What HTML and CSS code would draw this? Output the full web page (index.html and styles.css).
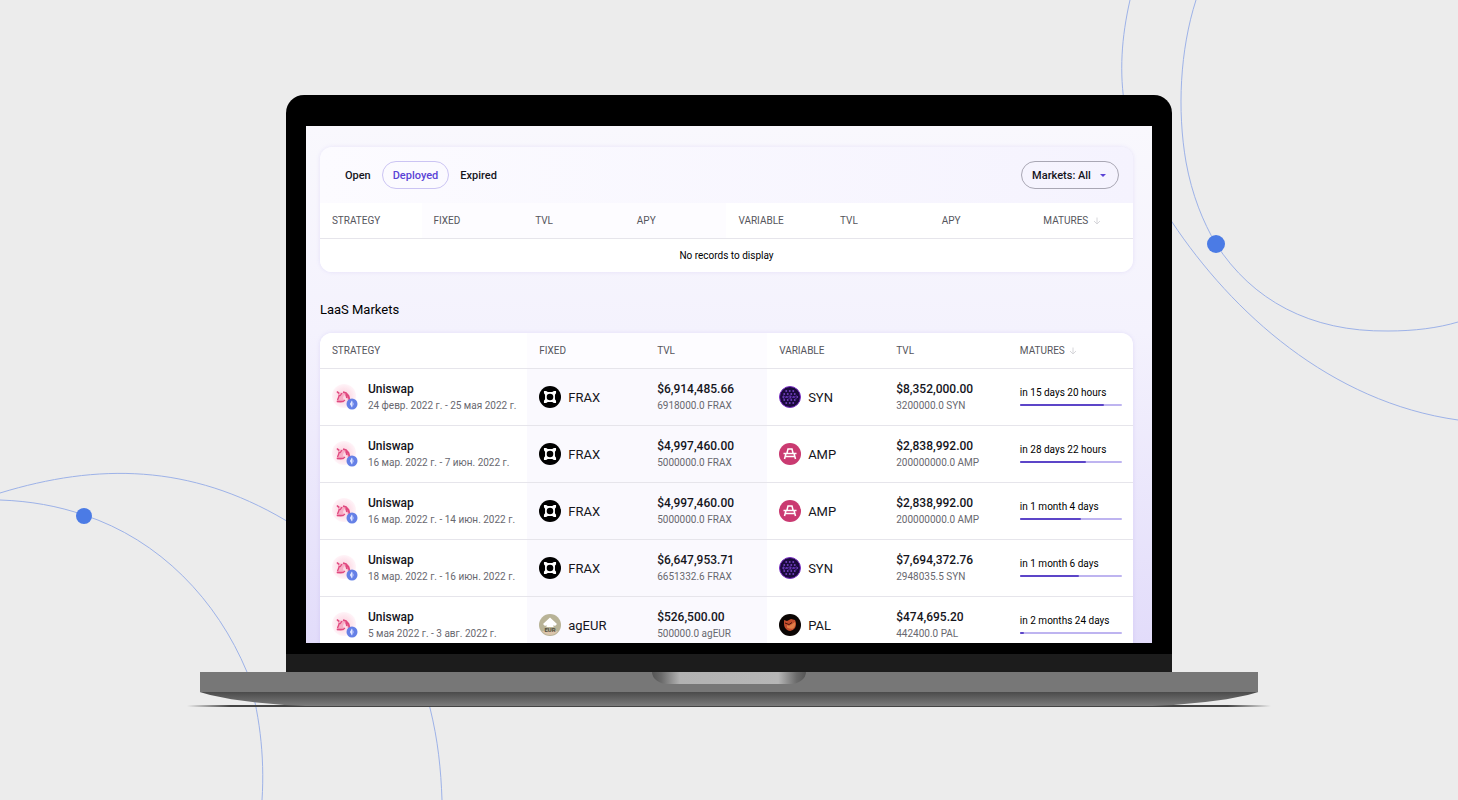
FILE: index.html
```html
<!DOCTYPE html>
<html lang="en">
<head>
    <meta charset="UTF-8">
    <title>LaaS Markets</title>
    <link rel="stylesheet" href="styles.css">
</head>
<body>
<svg class="icons" aria-hidden="true">
    <defs>
        <radialGradient id="glow">
            <stop offset="0" stop-color="#fbd3e1"/>
            <stop offset="0.6" stop-color="#fde4ec"/>
            <stop offset="1" stop-color="#fff4f8"/>
        </radialGradient>
        <symbol id="uniswap" viewBox="0 0 26 26">
            <circle cx="12" cy="12" r="12" fill="url(#glow)"/>
            <path d="M6 8l4 1 3-1 4 3 2 6-3 0-2-5-2-1-1 3 1 2-3 3-5-1 2-4z" fill="#f6adc5"/>
            <path d="M5 7.500l2 2M11 8l3 1 2.500 3 1 4M14 10l1 4" fill="none" stroke="#e0487f" stroke-width="1.700"/>
            <path d="M7.500 11l-2 5M10 9l-2 3M5 17.500h6l2-1.500" fill="none" stroke="#e0487f" stroke-width="1.300"/>
            <circle cx="20" cy="20" r="5.500" fill="#6580e6"/>
            <path d="M20 16.500l-2 3.500 2 3.500 2-3.500z" fill="#a9b8f7"/>
            <path d="M20 16.500v7l-2-3.500z" fill="#e3e8ff"/>
        </symbol>
        <symbol id="frax" viewBox="0 0 20 20">
            <circle cx="10" cy="10" r="10" fill="#000"/>
            <path d="M4.500 4.500h2l1.500 1h4l1.500-1h2v2l-1 1.500v4l1 1.500v2h-2l-1.500-1h-4l-1.500 1h-2v-2l1-1.500v-4l-1-1.500z" fill="#fff"/>
            <circle cx="10" cy="10" r="3" fill="#000"/>
        </symbol>
        <symbol id="syn" viewBox="0 0 22 22">
            <circle cx="11" cy="11" r="10.500" fill="#1b0a3e" stroke="#7a2fc4"/>
            <path d="M7 5h9M5 8h13M4 11h15M5 14h13M7 17h9" fill="none" stroke="#8a4fe0" stroke-width="1.400" stroke-linecap="round" stroke-dasharray="0.500 3"/>
            <path d="M4 9.500l3.500 2 3.500-2 3.500 2 3.500-2M4 13l3.500-2 3.500 2 3.500-2 3.500 2" fill="none" stroke="#5a2cab" stroke-width="0.700"/>
        </symbol>
        <symbol id="amp" viewBox="0 0 22 22">
            <circle cx="11" cy="11" r="11" fill="#ca3a71"/>
            <path d="M8 10l1-4h4l1 4M4.500 10.500h13M6 13.500h10M7 10.500l-1.500 5.500M15 10.500l1.500 5.500" fill="none" stroke="#fff" stroke-width="1.500"/>
        </symbol>
        <symbol id="ageur" viewBox="0 0 22 22">
            <circle cx="11" cy="11" r="11" fill="#b8b397"/>
            <path d="M3 17a10 10 0 0 0 16 0z" fill="#dcc5ab"/>
            <path d="M11 3.500l7 6.500-2 2-1.500-1v2h-7v-2l-1.500 1-2-2z" fill="#fff"/>
            <text x="11" y="18" text-anchor="middle" class="coin-label">EUR</text>
        </symbol>
        <symbol id="pal" viewBox="0 0 22 22">
            <circle cx="11" cy="11" r="11" fill="#0b0503"/>
            <path d="M5 6l3 1 4-2 4 1q2 4 0 8-3 4-7 2.500-4-2.500-4-6.500z" fill="#c24c2c"/>
            <path d="M8 11q2 2 5-1l3-2q1 4-2 6.500-3 1-6-1z" fill="#e07f48"/>
            <path d="M6 9l4 1.500 3-2" fill="none" stroke="#4a160b"/>
        </symbol>
        <symbol id="arrow" viewBox="0 0 8 8">
            <path d="M4 0.500v6.500M1 4l3 3 3-3" fill="none" stroke="#d6d6da"/>
        </symbol>
    </defs>
</svg>

<svg class="orbits" viewBox="0 0 1458 800" preserveAspectRatio="xMidYMid slice" aria-hidden="true">
    <path d="M1196 0C1180 50 1177 110 1186 162C1192 195 1203 222 1216 244C1252 300 1310 332 1388 331C1414 331 1438 328 1458 322"/>
    <path d="M1130 0C1113 75 1120 140 1172 222C1232 312 1330 402 1458 420"/>
    <path d="M0 493C98 463 190 464 285 520C360 565 410 630 430 708C438 740 441 770 442 800"/>
    <path d="M0 500C30 501 58 506 84 515C160 540 217 600 247 672C259 710 265 755 262 800"/>
    <circle cx="1216" cy="244" r="9"/>
    <circle cx="84" cy="516" r="8"/>
</svg>

<div class="laptop">
    <div class="lid">
        <main class="screen">
            <section class="card">
                <div class="toolbar">
                    <div class="tabs">
                        <button type="button" class="tab">Open</button>
                        <button type="button" class="tab active">Deployed</button>
                        <button type="button" class="tab">Expired</button>
                    </div>
                    <div class="filter">
                        <select aria-label="Markets">
                            <option>Markets: All</option>
                        </select>
                        <svg class="caret" viewBox="0 0 8 5" aria-hidden="true"><path d="M1 1h6l-3 3z"/></svg>
                    </div>
                </div>
                <table class="positions">
                    <thead>
                    <tr>
                        <th>STRATEGY</th>
                        <th class="tint">FIXED</th>
                        <th class="tint">TVL</th>
                        <th class="tint">APY</th>
                        <th>VARIABLE</th>
                        <th>TVL</th>
                        <th>APY</th>
                        <th>MATURES <svg class="sort"><use href="#arrow"/></svg></th>
                    </tr>
                    </thead>
                    <tbody>
                    <tr>
                        <td colspan="8" class="empty">No records to display</td>
                    </tr>
                    </tbody>
                </table>
            </section>

            <h2>LaaS Markets</h2>

            <section class="card">
                <table class="markets">
                    <thead>
                    <tr>
                        <th class="col-strategy">STRATEGY</th>
                        <th class="col-fixed tint">FIXED</th>
                        <th class="col-fixed-tvl tint">TVL</th>
                        <th class="col-variable">VARIABLE</th>
                        <th class="col-variable-tvl">TVL</th>
                        <th class="col-matures">MATURES <svg class="sort"><use href="#arrow"/></svg></th>
                    </tr>
                    </thead>
                    <tbody>
                    <tr>
                        <td><div class="strategy"><svg><use href="#uniswap"/></svg><div><div class="main">Uniswap</div><div class="sub">24 февр. 2022 г. - 25 мая 2022 г.</div></div></div></td>
                        <td class="tint"><div class="coin"><svg><use href="#frax"/></svg>FRAX</div></td>
                        <td class="tint"><div class="main">$6,914,485.66</div><div class="sub">6918000.0 FRAX</div></td>
                        <td><div class="coin"><svg><use href="#syn"/></svg>SYN</div></td>
                        <td><div class="main">$8,352,000.00</div><div class="sub">3200000.0 SYN</div></td>
                        <td><div class="matures">in 15 days 20 hours</div><div class="bar"><div class="fill" style="width: 82%"></div></div></td>
                    </tr>
                    <tr>
                        <td><div class="strategy"><svg><use href="#uniswap"/></svg><div><div class="main">Uniswap</div><div class="sub">16 мар. 2022 г. - 7 июн. 2022 г.</div></div></div></td>
                        <td class="tint"><div class="coin"><svg><use href="#frax"/></svg>FRAX</div></td>
                        <td class="tint"><div class="main">$4,997,460.00</div><div class="sub">5000000.0 FRAX</div></td>
                        <td><div class="coin"><svg><use href="#amp"/></svg>AMP</div></td>
                        <td><div class="main">$2,838,992.00</div><div class="sub">200000000.0 AMP</div></td>
                        <td><div class="matures">in 28 days 22 hours</div><div class="bar"><div class="fill" style="width: 65%"></div></div></td>
                    </tr>
                    <tr>
                        <td><div class="strategy"><svg><use href="#uniswap"/></svg><div><div class="main">Uniswap</div><div class="sub">16 мар. 2022 г. - 14 июн. 2022 г.</div></div></div></td>
                        <td class="tint"><div class="coin"><svg><use href="#frax"/></svg>FRAX</div></td>
                        <td class="tint"><div class="main">$4,997,460.00</div><div class="sub">5000000.0 FRAX</div></td>
                        <td><div class="coin"><svg><use href="#amp"/></svg>AMP</div></td>
                        <td><div class="main">$2,838,992.00</div><div class="sub">200000000.0 AMP</div></td>
                        <td><div class="matures">in 1 month 4 days</div><div class="bar"><div class="fill" style="width: 60%"></div></div></td>
                    </tr>
                    <tr>
                        <td><div class="strategy"><svg><use href="#uniswap"/></svg><div><div class="main">Uniswap</div><div class="sub">18 мар. 2022 г. - 16 июн. 2022 г.</div></div></div></td>
                        <td class="tint"><div class="coin"><svg><use href="#frax"/></svg>FRAX</div></td>
                        <td class="tint"><div class="main">$6,647,953.71</div><div class="sub">6651332.6 FRAX</div></td>
                        <td><div class="coin"><svg><use href="#syn"/></svg>SYN</div></td>
                        <td><div class="main">$7,694,372.76</div><div class="sub">2948035.5 SYN</div></td>
                        <td><div class="matures">in 1 month 6 days</div><div class="bar"><div class="fill" style="width: 58%"></div></div></td>
                    </tr>
                    <tr>
                        <td><div class="strategy"><svg><use href="#uniswap"/></svg><div><div class="main">Uniswap</div><div class="sub">5 мая 2022 г. - 3 авг. 2022 г.</div></div></div></td>
                        <td class="tint"><div class="coin"><svg><use href="#ageur"/></svg>agEUR</div></td>
                        <td class="tint"><div class="main">$526,500.00</div><div class="sub">500000.0 agEUR</div></td>
                        <td><div class="coin"><svg><use href="#pal"/></svg>PAL</div></td>
                        <td><div class="main">$474,695.20</div><div class="sub">442400.0 PAL</div></td>
                        <td><div class="matures">in 2 months 24 days</div><div class="bar"><div class="fill" style="width: 4%"></div></div></td>
                    </tr>
                    </tbody>
                </table>
            </section>
        </main>
        <div class="chin"></div>
    </div>
    <div class="base"><div class="notch"></div></div>
    <div class="underside"></div>
    <div class="ground"></div>
</div>
</body>
</html>
```

FILE: styles.css
```css
* {
    box-sizing: border-box;
}
body {
    position: relative;
    margin: 0;
    min-height: 100vh;
    padding-top: 95px;
    overflow: hidden;
    background: #ECECEC;
    font-family: Roboto, "Liberation Sans", sans-serif;
    color: #15151C;
}
.icons {
    position: absolute;
    width: 0;
    height: 0;
}
.coin-label {
    font: 700 6px Roboto, sans-serif;
    fill: #55513F;
}
.orbits {
    position: absolute;
    left: 0;
    top: 0;
    width: 100%;
    height: 100%;
}
.orbits path {
    fill: none;
    stroke: #9DB2E8;
}
.orbits circle {
    fill: #4B7BE5;
}

/* laptop */
.laptop {
    position: relative;
    display: flex;
    flex-direction: column;
    align-items: center;
    width: 74.4%;
    margin: 0 auto;
}
.lid {
    width: 81.7%;
    background: #000;
    border-radius: 18px 18px 0 0;
    overflow: hidden;
}
.screen {
    height: 517px;
    margin: 31px 20px 11px;
    padding: 21px 19px 0 14px;
    overflow: hidden;
    background: linear-gradient(to bottom, #F9F8FD 0%, #F4F2FD 40%, #E2DCFA 100%);
}
.chin {
    height: 18px;
    background: #1C1C1C;
}
.base {
    display: flex;
    justify-content: center;
    width: 97.6%;
    height: 20px;
    background: #777;
}
.notch {
    width: 154px;
    height: 12px;
    border-radius: 0 0 16px 16px / 0 0 12px 12px;
    background: linear-gradient(to right, #555 0%, #6A6A6A 6%, #B2B2B2 18%, #B6B6B6 82%, #6A6A6A 94%, #555 100%);
}
.underside {
    width: 97.6%;
    height: 14px;
    background: linear-gradient(to bottom, #4B4B4B, #7C7C7C);
    clip-path: polygon(0 0, 100% 0, 99% 22%, 97% 52%, 95% 72%, 92% 92%, 90% 100%, 10% 100%, 8% 92%, 5% 72%, 3% 52%, 1% 22%);
}
.ground {
    width: 100%;
    height: 2px;
    margin-top: -1px;
    background: linear-gradient(to right, transparent, #444 4%, #444 96%, transparent);
}

/* app */
.card {
    border-radius: 12px;
    overflow: hidden;
    background: linear-gradient(to right, #FCFBFF, #F5F3FE);
    box-shadow: 0 0 4px rgba(120, 100, 220, 0.14);
}
.toolbar {
    display: flex;
    align-items: center;
    justify-content: space-between;
    height: 56px;
    padding: 0 14px;
}
.tabs {
    display: flex;
}
.tab {
    height: 28px;
    padding: 0 10px;
    border: 1px solid transparent;
    border-radius: 14px;
    background: none;
    font: 500 11px Roboto, sans-serif;
    color: inherit;
}
.tab.active {
    border-color: #CBC4F3;
    color: #5A43D6;
}
.filter {
    position: relative;
}
.filter select {
    width: 98px;
    height: 28px;
    padding: 0 10px;
    border: 1px solid #A9A7B4;
    border-radius: 14px;
    appearance: none;
    background: none;
    font: 500 11px Roboto, sans-serif;
    color: inherit;
}
.caret {
    position: absolute;
    right: 12px;
    top: 12px;
    width: 8px;
    height: 5px;
    fill: #5A43D6;
    pointer-events: none;
}
h2 {
    margin: 29px 0 14px;
    font-size: 13px;
    font-weight: 400;
    line-height: 18px;
    color: #000;
}
table {
    width: 100%;
    table-layout: fixed;
    border-collapse: separate;
    border-spacing: 0;
    background: #FFF;
}
th, td {
    padding: 0 0 0 12px;
    border-bottom: 1px solid #E6E5EB;
    text-align: left;
    white-space: nowrap;
}
th {
    height: 36px;
    font-size: 10px;
    font-weight: 400;
    color: #55555C;
}
.positions td {
    height: 33px;
    border-bottom: 0;
}
.positions .empty {
    padding: 0;
    text-align: center;
    font-size: 10px;
    color: #000;
}
.markets td {
    height: 57px;
}
.tint {
    background: #FAF9FE;
}
th.tint {
    background: #FDFCFF;
}
.sort {
    width: 8px;
    height: 8px;
    margin-left: 2px;
    vertical-align: -1px;
}
.col-strategy {
    width: 25.5%;
}
.col-fixed {
    width: 14.5%;
}
.col-fixed-tvl {
    width: 15%;
}
.col-variable {
    width: 14.4%;
}
.col-variable-tvl {
    width: 15.2%;
}
.strategy {
    display: flex;
    align-items: center;
    gap: 10px;
}
.strategy svg {
    width: 26px;
    height: 26px;
}
.main {
    font-size: 12px;
    font-weight: 500;
    line-height: 18px;
}
.sub {
    font-size: 10px;
    line-height: 16px;
    color: #68686F;
}
.coin {
    display: flex;
    align-items: center;
    gap: 7px;
    font-size: 13px;
}
.coin svg {
    width: 22px;
    height: 22px;
}
.matures {
    font-size: 10px;
    line-height: 16px;
    color: #000;
}
.bar {
    height: 2px;
    margin: 3px 11px 4px 0;
    border-radius: 1px;
    background: #BEB4F0;
}
.bar .fill {
    height: 2px;
    border-radius: 1px;
    background: #5C45C8;
}
```
